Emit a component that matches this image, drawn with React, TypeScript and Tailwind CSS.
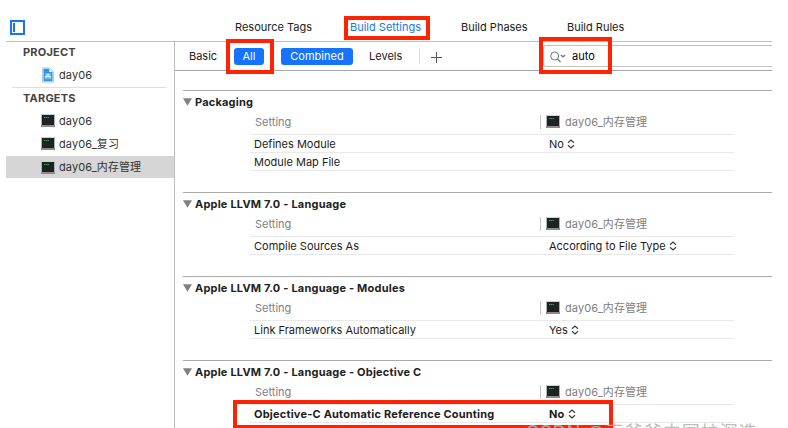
import type { ReactNode } from "react";

function Terminal() {
  return (
    <svg width="14" height="13" viewBox="0 0 14 13" className="block shrink-0">
      <rect x="0" y="0" width="14" height="13" rx="0.5" fill="#a9b4b8" />
      <rect x="0.4" y="0" width="13.2" height="1" fill="#bcd9e6" />
      <rect x="1" y="1" width="12" height="10" fill="#202122" />
      <path d="M3 3.5h5" stroke="#35a853" strokeWidth="1" strokeDasharray="1.4 0.4" />
      <rect x="0" y="11" width="14" height="2" fill="#8b8b8b" />
    </svg>
  );
}

function ProjectDoc() {
  return (
    <svg width="12" height="16" viewBox="0 0 12 16" className="block shrink-0">
      <path d="M0.5 0.8h7.2l3.8 3.8v10.6H0.5z" fill="#eef4f8" stroke="#b5bfc6" strokeWidth="0.8" />
      <path d="M1.5 1.8h5.7l3.3 3.3v9.2h-9z" fill="#2b95e9" />
      <path d="M7.2 1.8v3.3h3.3z" fill="#e4f2fc" />
      <rect x="2.8" y="6" width="6.4" height="6.4" fill="#64b7f4" />
      <path d="M3.4 11.2 6 6.8l2.6 4.4M3.2 9.6h5.6" stroke="#fff" strokeWidth="0.9" fill="none" />
    </svg>
  );
}

function Stepper() {
  return (
    <svg width="8" height="10" viewBox="0 0 8 10" className="ml-[3px] block shrink-0" fill="none" stroke="#3c3c3c" strokeWidth="1.2">
      <path d="M1 3.8 4 1l3 2.8M1 6.2 4 9l3-2.8" />
    </svg>
  );
}

function Target({ name, selected }: { name: string; selected?: boolean }) {
  return (
    <div className={selected ? "flex h-[22px] items-center bg-[#d6d6d6] pl-[35px]" : "flex h-[23px] items-center pb-[2px] pl-[35px]"}>
      <Terminal />
      <span className="ml-1 tracking-[0.1px]">{name}</span>
    </div>
  );
}

type Row = { label: string; value?: string; strong?: boolean };

function Section({ title, rows }: { title: string; rows: Row[] }) {
  return (
    <section className="mb-[21px] border-t border-[#a9a9a9]">
      <h2 className="flex h-[22px] items-center font-bold tracking-[0.2px] text-[#222]">
        <svg width="9" height="8" viewBox="0 0 9 8" className="mr-[3px] block">
          <path d="M0 0.3h9L4.5 7.8z" fill="#808080" />
        </svg>
        {title}
      </h2>
      <div className="ml-[67px] w-[484px]">
        <div className="flex h-[21px] items-start text-[#808080]">
          <div className="w-[290px] pt-px pl-[5px] leading-[16px]">Setting</div>
          <div className="mt-[2px] flex h-[14px] items-start border-l border-[#c5c5c5] pl-[5px]">
            <Terminal />
            <span className="ml-[5px] leading-[14px] tracking-[0.1px]">day06_内存管理</span>
          </div>
        </div>
        <div className="border-t border-[#e8e8e8]">
          {rows.map((r) => (
            <div
              key={r.label}
              className={
                r.strong
                  ? "flex h-[18px] items-center border-b border-[#e8e8e8] font-bold tracking-[0.2px] text-[#1c1c1c]"
                  : "flex h-[18px] items-center border-b border-[#e8e8e8] text-[#1c1c1c]"
              }
            >
              <div className="w-[299px] pl-1">{r.label}</div>
              {r.value && (
                <div className="flex items-center">
                  <span>{r.value}</span>
                  <Stepper />
                </div>
              )}
            </div>
          ))}
        </div>
      </div>
    </section>
  );
}

function Mark({ className }: { className: string }) {
  return <div className={"pointer-events-none absolute border-[4px] border-[#fc2403] " + className} />;
}

function Tab({ children, className }: { children: ReactNode; className: string }) {
  return <span className={"whitespace-nowrap " + className}>{children}</span>;
}

export default function App() {
  return (
    <div className="relative h-[428px] w-[788px] overflow-hidden bg-white font-['Inter','Noto_Sans_CJK_SC',sans-serif] text-[11px] leading-[16px] tracking-[0px] text-[#202020]">
      <div className="w-[772px] pl-[6px]">
        <header className="flex h-[42px] items-center border-b border-[#bfbfbf] pt-[14px]">
          <svg width="15" height="15" viewBox="0 0 15 15" className="ml-1 block">
            <rect x="1" y="1" width="13" height="13" fill="none" stroke="#1574fb" strokeWidth="2" />
            <rect x="3" y="3" width="2" height="9" fill="#1574fb" />
          </svg>
          <div className="flex pb-px">
            <Tab className="ml-[210px] w-[115px]">Resource Tags</Tab>
            <Tab className="w-[111px] text-[#2079dc]">Build Settings</Tab>
            <Tab className="w-[106px]">Build Phases</Tab>
            <Tab className="">Build Rules</Tab>
          </div>
        </header>
        <div className="flex h-[386px]">
          <aside className="w-[169px] shrink-0 border-r border-[#bcbcbc] text-[#333]">
            <div className="mr-2 ml-[6px] h-[46px] border-b border-[#dedede]">
              <div className="pt-[2px] pl-[11px] font-bold tracking-[0.2px] text-[#444]">PROJECT</div>
              <div className="flex items-center pt-[7px] pl-[30px]">
                <ProjectDoc />
                <span className="ml-[5px] tracking-[0.1px]">day06</span>
              </div>
            </div>
            <div className="h-[22px] pt-[2px] pl-[17px] font-bold tracking-[0.2px] text-[#444]">TARGETS</div>
            <Target name="day06" />
            <Target name="day06_复习" />
            <Target name="day06_内存管理" selected />
          </aside>
          <main className="min-w-0 flex-1">
            <div className="flex h-[29px] items-center border-b border-[#a9a9a9]">
              <span className="ml-[14px] w-[45px]">Basic</span>
              <span className="flex h-[17px] w-[30px] items-center justify-center rounded-[3px] bg-[#1574fb] text-white">All</span>
              <span className="ml-[17px] flex h-[17px] w-[72px] items-center justify-center rounded-[3px] bg-[#1574fb] text-white">Combined</span>
              <span className="ml-4 w-[50px]">Levels</span>
              <span className="h-[15px] w-px bg-[#d8d8d8]" />
              <svg width="11" height="11" viewBox="0 0 11 11" className="mt-[2px] ml-[11px] block">
                <path d="M5.5 0v11M0 5.5h11" stroke="#555" strokeWidth="1" />
              </svg>
              <div className="ml-[101px] flex h-[22px] flex-1 items-center rounded-l-[3px] border border-r-0 border-[#c2c2c2] pl-[6px] text-black">
                <svg width="16" height="12" viewBox="0 0 16 12" className="mt-px block" fill="none" stroke="#777">
                  <circle cx="4.7" cy="5" r="4" strokeWidth="1" />
                  <path d="m7.5 8 3 3" strokeWidth="1.2" />
                  <path d="m10.8 4 2.2 1.8L15.2 4" strokeWidth="1.3" />
                </svg>
                <span className="ml-[6px]">auto</span>
              </div>
            </div>
            <div className="pt-[19px] pl-2">
              <Section title="Packaging" rows={[{ label: "Defines Module", value: "No" }, { label: "Module Map File" }]} />
              <Section title="Apple LLVM 7.0 - Language" rows={[{ label: "Compile Sources As", value: "According to File Type" }]} />
              <Section title="Apple LLVM 7.0 - Language - Modules" rows={[{ label: "Link Frameworks Automatically", value: "Yes" }]} />
              <Section title="Apple LLVM 7.0 - Language - Objective C" rows={[{ label: "Objective-C Automatic Reference Counting", value: "No", strong: true }]} />
            </div>
          </main>
        </div>
      </div>
      <Mark className="top-[16px] left-[344px] h-[24px] w-[86px]" />
      <Mark className="top-[39px] left-[226px] h-[35px] w-[48px]" />
      <Mark className="top-[37px] left-[539px] h-[37px] w-[73px]" />
      <Mark className="top-[400px] left-[233px] h-[29px] w-[380px]" />
      <div className="absolute top-[421px] left-[526px] text-[18px] leading-[24px] tracking-[1px] whitespace-nowrap text-[#b4b4b4]/90">CSDN @春爷爷中国护深造</div>
    </div>
  );
}
